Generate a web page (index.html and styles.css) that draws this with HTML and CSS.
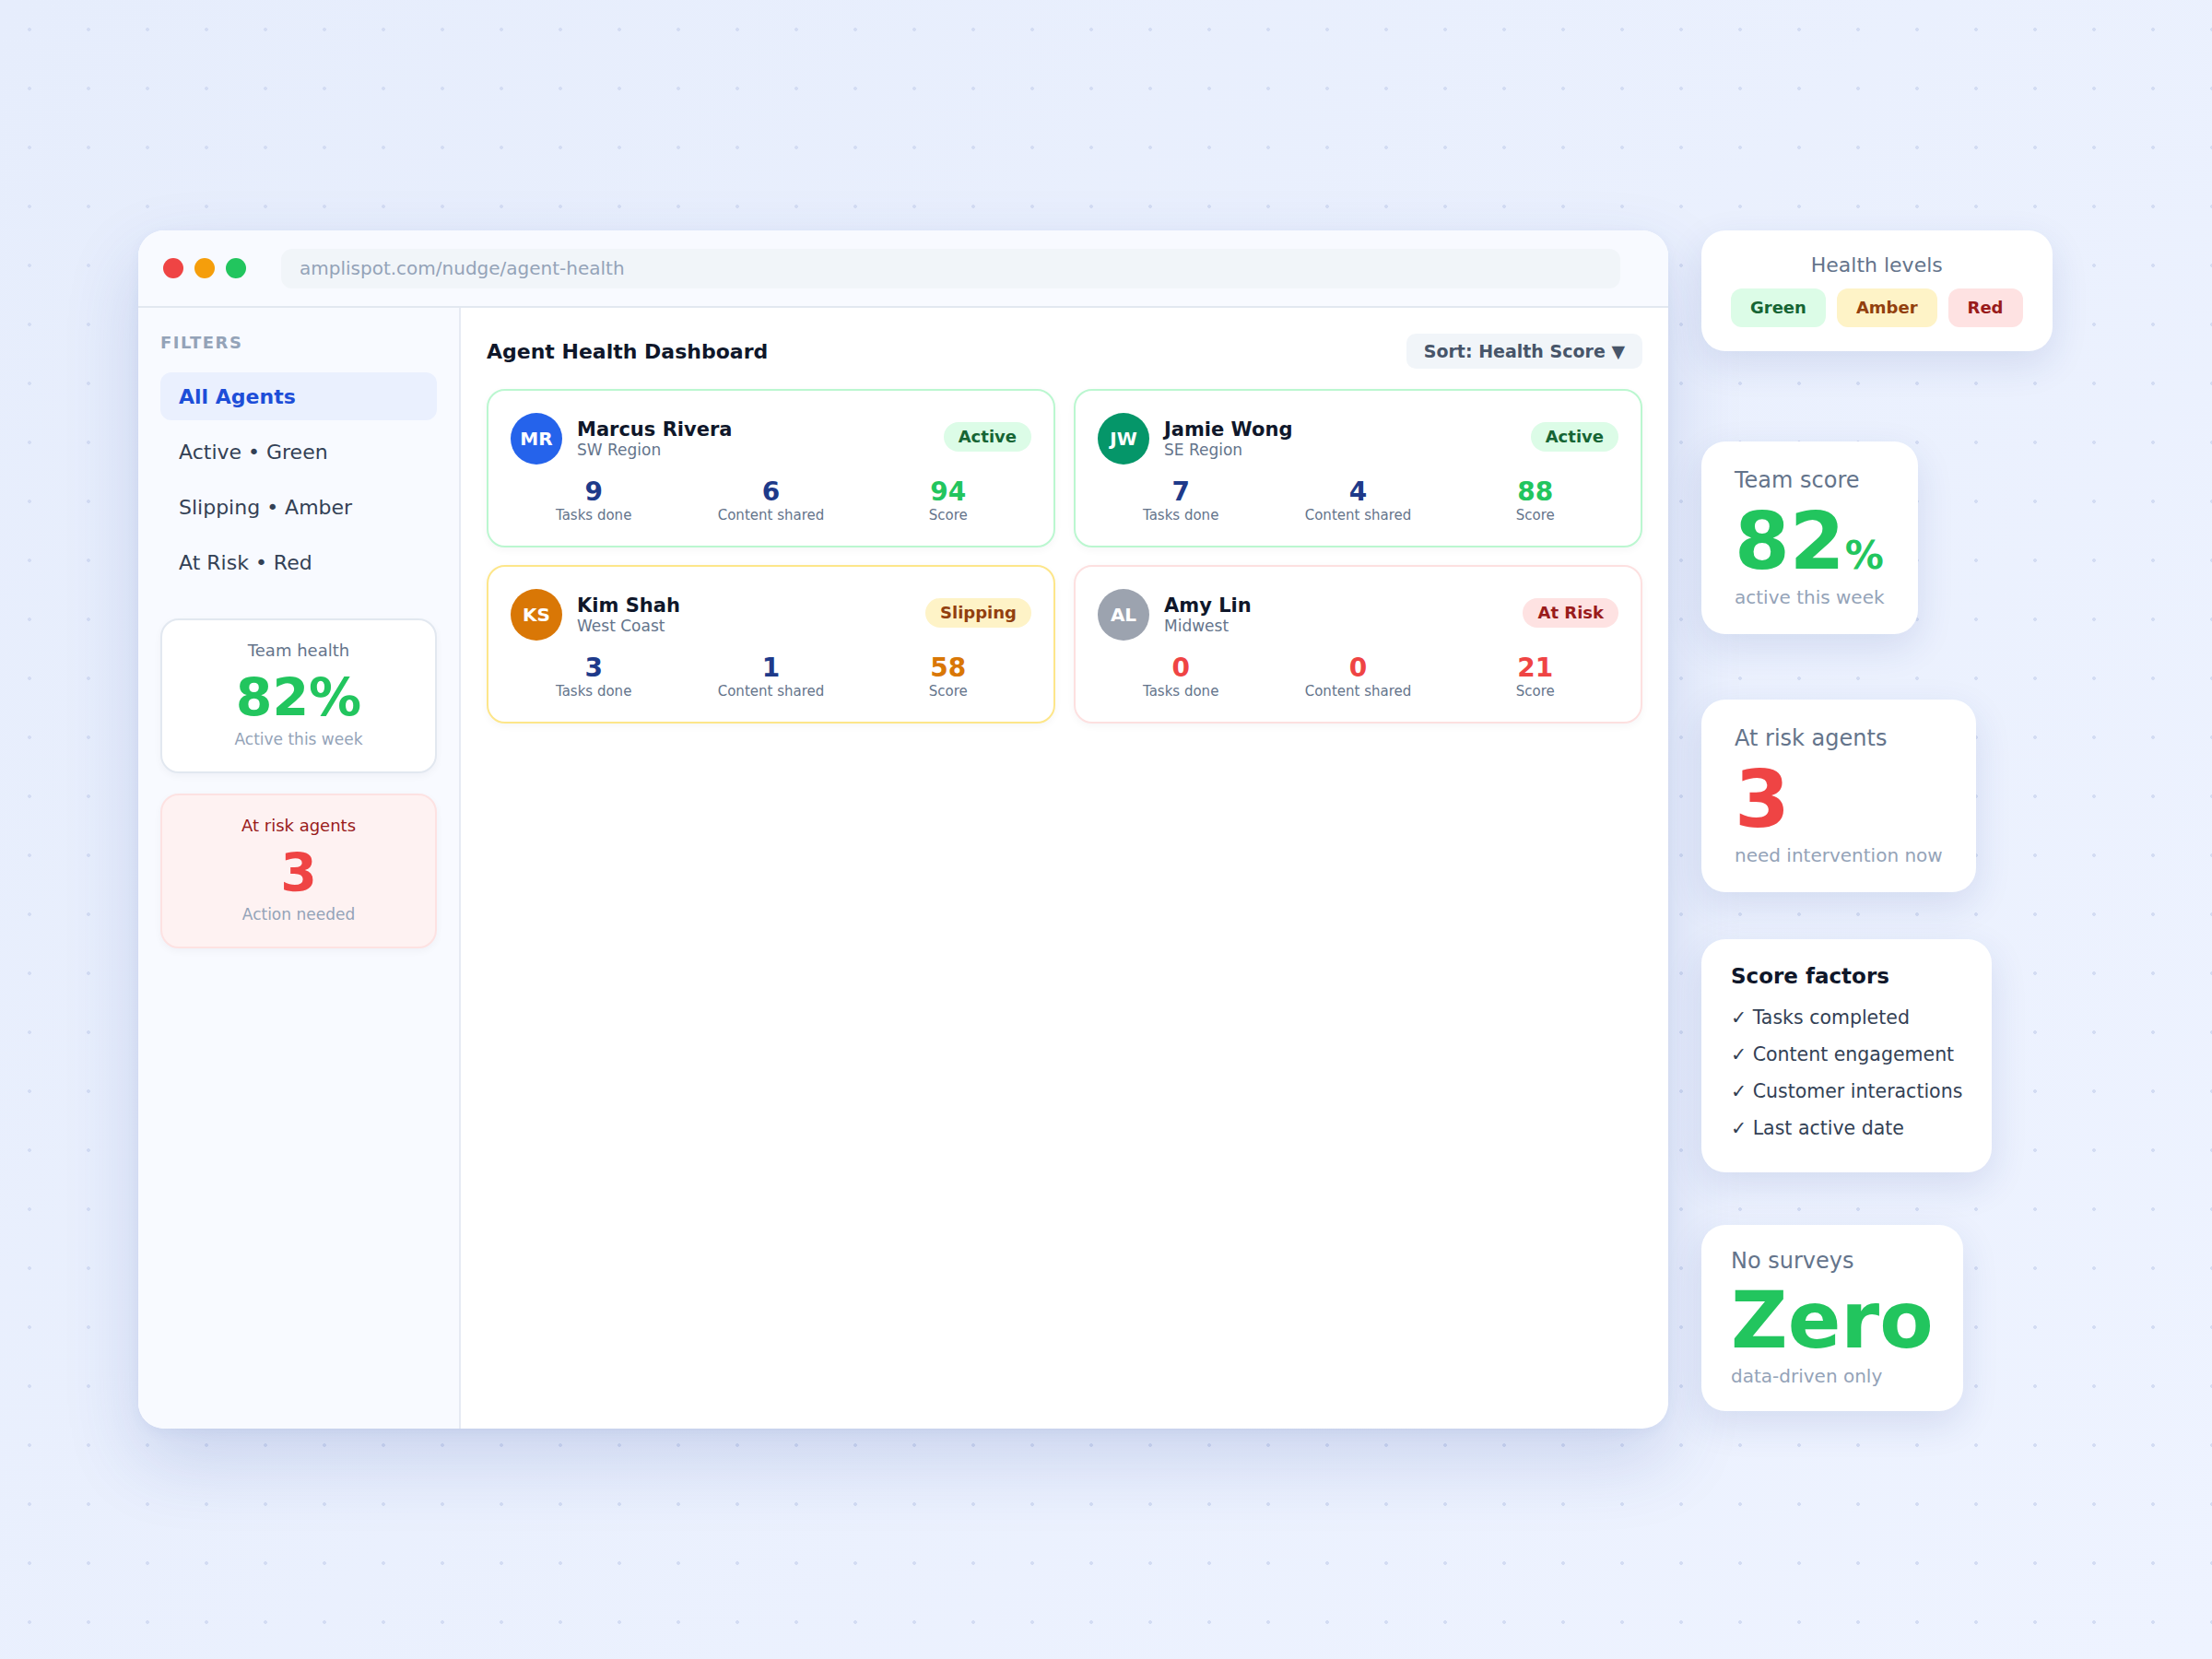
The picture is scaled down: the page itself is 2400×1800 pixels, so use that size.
FILE: index.html
```html
<!DOCTYPE html>
<html lang="en">
<head>
    <meta charset="UTF-8">
    <meta name="viewport" content="width=device-width, initial-scale=1.0">
    <title>Agent Health Dashboard</title>
    <link rel="stylesheet" href="styles.css">
</head>
<body>
    <div class="stage">
        <div class="window">
            <div class="titlebar">
                <div class="lights">
                    <span class="light red"></span>
                    <span class="light amber"></span>
                    <span class="light green"></span>
                </div>
                <div class="url">amplispot.com/nudge/agent-health</div>
            </div>

            <div class="app">
                <aside class="sidebar">
                    <div class="filters-label">Filters</div>
                    <ul class="filter-list">
                        <li class="filter active">All Agents</li>
                        <li class="filter">Active • Green</li>
                        <li class="filter">Slipping • Amber</li>
                        <li class="filter">At Risk • Red</li>
                    </ul>

                    <div class="mini-card">
                        <div class="mini-title">Team health</div>
                        <div class="mini-value">82%</div>
                        <div class="mini-sub">Active this week</div>
                    </div>
                    <div class="mini-card risk">
                        <div class="mini-title">At risk agents</div>
                        <div class="mini-value">3</div>
                        <div class="mini-sub">Action needed</div>
                    </div>
                </aside>

                <main class="content">
                    <div class="content-head">
                        <h1>Agent Health Dashboard</h1>
                        <div class="sort">Sort: Health Score ▼</div>
                    </div>

                    <div class="agent-grid">
                        <div class="agent-card green">
                            <div class="agent-head">
                                <div class="avatar blue">MR</div>
                                <div>
                                    <div class="agent-name">Marcus Rivera</div>
                                    <div class="agent-region">SW Region</div>
                                </div>
                                <span class="badge active">Active</span>
                            </div>
                            <div class="stats">
                                <div><div class="stat-num">9</div><div class="stat-label">Tasks done</div></div>
                                <div><div class="stat-num">6</div><div class="stat-label">Content shared</div></div>
                                <div><div class="stat-num good">94</div><div class="stat-label">Score</div></div>
                            </div>
                        </div>

                        <div class="agent-card green">
                            <div class="agent-head">
                                <div class="avatar teal">JW</div>
                                <div>
                                    <div class="agent-name">Jamie Wong</div>
                                    <div class="agent-region">SE Region</div>
                                </div>
                                <span class="badge active">Active</span>
                            </div>
                            <div class="stats">
                                <div><div class="stat-num">7</div><div class="stat-label">Tasks done</div></div>
                                <div><div class="stat-num">4</div><div class="stat-label">Content shared</div></div>
                                <div><div class="stat-num good">88</div><div class="stat-label">Score</div></div>
                            </div>
                        </div>

                        <div class="agent-card amber">
                            <div class="agent-head">
                                <div class="avatar orange">KS</div>
                                <div>
                                    <div class="agent-name">Kim Shah</div>
                                    <div class="agent-region">West Coast</div>
                                </div>
                                <span class="badge slipping">Slipping</span>
                            </div>
                            <div class="stats">
                                <div><div class="stat-num">3</div><div class="stat-label">Tasks done</div></div>
                                <div><div class="stat-num">1</div><div class="stat-label">Content shared</div></div>
                                <div><div class="stat-num warn">58</div><div class="stat-label">Score</div></div>
                            </div>
                        </div>

                        <div class="agent-card red">
                            <div class="agent-head">
                                <div class="avatar grey">AL</div>
                                <div>
                                    <div class="agent-name">Amy Lin</div>
                                    <div class="agent-region">Midwest</div>
                                </div>
                                <span class="badge risk">At Risk</span>
                            </div>
                            <div class="stats">
                                <div><div class="stat-num bad">0</div><div class="stat-label">Tasks done</div></div>
                                <div><div class="stat-num bad">0</div><div class="stat-label">Content shared</div></div>
                                <div><div class="stat-num bad">21</div><div class="stat-label">Score</div></div>
                            </div>
                        </div>
                    </div>
                </main>
            </div>
        </div>

        <div class="callouts">
            <div class="callout levels">
                <div class="levels-title">Health levels</div>
                <div class="pills">
                    <span class="pill green">Green</span>
                    <span class="pill amber">Amber</span>
                    <span class="pill red">Red</span>
                </div>
            </div>

            <div class="callout stat-callout team">
                <div class="callout-title">Team score</div>
                <div class="callout-big good">82<span class="pct">%</span></div>
                <div class="callout-sub">active this week</div>
            </div>

            <div class="callout stat-callout at-risk">
                <div class="callout-title">At risk agents</div>
                <div class="callout-big bad">3</div>
                <div class="callout-sub">need intervention now</div>
            </div>

            <div class="callout factors">
                <div class="factors-title">Score factors</div>
                <ul class="factor-list">
                    <li>✓ Tasks completed</li>
                    <li>✓ Content engagement</li>
                    <li>✓ Customer interactions</li>
                    <li>✓ Last active date</li>
                </ul>
            </div>

            <div class="callout surveys">
                <div class="callout-title">No surveys</div>
                <div class="callout-big zero good">Zero</div>
                <div class="callout-sub">data-driven only</div>
            </div>
        </div>
    </div>
</body>
</html>
```

FILE: styles.css
```css
/* Page */
body {
    margin: 0;
    min-height: 1800px;
    font-family: "DejaVu Sans", "Noto Sans", sans-serif;
    background-color: #ebf0fd;
    background-image:
        radial-gradient(circle at center, #d3dcf3 1.6px, transparent 2.2px),
        linear-gradient(135deg, #e6edfc 0%, #eef3ff 100%);
    background-size: 64px 64px, 100% 100%;
}

.stage {
    display: flex;
    align-items: flex-start;
    gap: 36px;
    padding: 250px 0 0 150px;
}

/* Browser window */
.window {
    width: 1660px;
    height: 1300px;
    display: flex;
    flex-direction: column;
    background: #fff;
    border-radius: 28px;
    overflow: hidden;
    box-shadow: 0 34px 80px rgba(40, 70, 160, 0.17), 0 4px 14px rgba(40, 70, 160, 0.05);
}

.titlebar {
    height: 82px;
    flex-shrink: 0;
    display: flex;
    align-items: center;
    padding: 0 52px 0 27px;
    background: #f8faff;
    border-bottom: 2px solid #e2e8f0;
}

.lights {
    display: flex;
    gap: 12px;
}

.light {
    width: 22px;
    height: 22px;
    border-radius: 50%;
}

.light.red { background: #ef4444; }
.light.amber { background: #f59e0b; }
.light.green { background: #22c55e; }

.url {
    flex: 1;
    height: 43px;
    margin-left: 38px;
    padding-left: 20px;
    display: flex;
    align-items: center;
    border-radius: 12px;
    background: #f1f5f9;
    color: #94a3b8;
    font-size: 20px;
}

.app {
    flex: 1;
    display: flex;
}

/* Sidebar */
.sidebar {
    width: 350px;
    box-sizing: border-box;
    padding: 27px 24px;
    background: #f8faff;
    border-right: 2px solid #e6eaf3;
}

.filters-label {
    font-size: 18px;
    line-height: 21px;
    font-weight: bold;
    letter-spacing: 1.5px;
    text-transform: uppercase;
    color: #94a3b8;
    margin-bottom: 22px;
}

.filter-list {
    list-style: none;
    margin: 0 0 35px;
    padding: 0;
    display: flex;
    flex-direction: column;
    gap: 8px;
}

.filter {
    height: 52px;
    display: flex;
    align-items: center;
    padding: 0 20px;
    border-radius: 12px;
    font-size: 22px;
    color: #334155;
}

.filter.active {
    background: #eaf0fe;
    color: #1d4ed8;
    font-weight: bold;
}

.mini-card {
    padding: 22px 16px 25px;
    margin-bottom: 22px;
    text-align: center;
    background: #fff;
    border: 2px solid #e2e8f0;
    border-radius: 20px;
    box-shadow: 0 3px 8px rgba(15, 23, 42, 0.04);
}

.mini-title {
    font-size: 18px;
    line-height: 22px;
    color: #64748b;
}

.mini-value {
    margin-top: 12px;
    font-size: 57px;
    line-height: 57px;
    font-weight: bold;
    color: #22c55e;
}

.mini-sub {
    margin-top: 6px;
    font-size: 17px;
    line-height: 20px;
    color: #94a3b8;
}

.mini-card.risk {
    background: #fef2f2;
    border-color: #fde2e2;
}

.mini-card.risk .mini-title { color: #991b1b; }
.mini-card.risk .mini-value { color: #ef4444; }

/* Main content */
.content {
    flex: 1;
    padding: 28px;
}

.content-head {
    display: flex;
    justify-content: space-between;
    align-items: center;
    margin-bottom: 22px;
}

.content-head h1 {
    margin: 0;
    font-size: 22px;
    color: #0f172a;
}

.sort {
    padding: 8px 19px;
    line-height: 22px;
    font-size: 19px;
    font-weight: bold;
    color: #475569;
    background: #f1f5f9;
    border-radius: 10px;
}

.agent-grid {
    display: grid;
    grid-template-columns: 1fr 1fr;
    gap: 19px 20px;
}

.agent-card {
    padding: 24px 24px 23px;
    background: #fff;
    border: 2px solid #e2e8f0;
    border-radius: 20px;
    box-shadow: 0 3px 8px rgba(15, 23, 42, 0.04);
}

.agent-card.green { border-color: #bbf7d0; }
.agent-card.amber { border-color: #fde68a; }
.agent-card.red { border-color: #fde0e0; }

.agent-head {
    display: flex;
    align-items: center;
}

.avatar {
    width: 56px;
    height: 56px;
    margin-right: 16px;
    border-radius: 50%;
    display: flex;
    align-items: center;
    justify-content: center;
    color: #fff;
    font-size: 20px;
    font-weight: bold;
}

.avatar.blue { background: #2563eb; }
.avatar.teal { background: #059669; }
.avatar.orange { background: #d97706; }
.avatar.grey { background: #9ca3af; }

.agent-name {
    font-size: 21px;
    line-height: 24px;
    font-weight: bold;
    color: #0f172a;
}

.agent-region {
    font-size: 17px;
    line-height: 20px;
    color: #64748b;
}

.badge {
    margin-left: auto;
    margin-bottom: 4px;
    padding: 5px 16px;
    line-height: 22px;
    font-size: 18px;
    font-weight: bold;
    border-radius: 999px;
}

.badge.active { background: #dcfce7; color: #166534; }
.badge.slipping { background: #fef3c7; color: #92400e; }
.badge.risk { background: #fee2e2; color: #991b1b; }

.stats {
    display: grid;
    grid-template-columns: repeat(3, 1fr);
    gap: 12px;
    margin-top: 13px;
    text-align: center;
}

.stat-num {
    font-size: 28px;
    line-height: 33px;
    font-weight: bold;
    color: #1e3a8a;
}

.stat-num.good { color: #22c55e; }
.stat-num.warn { color: #d97706; }
.stat-num.bad { color: #ef4444; }

.stat-label {
    font-size: 15px;
    line-height: 19px;
    color: #64748b;
}

/* Floating callouts */
.callouts {
    display: flex;
    flex-direction: column;
    align-items: flex-start;
}

.callout {
    background: #fff;
    border-radius: 26px;
    box-shadow: 0 14px 40px rgba(30, 58, 138, 0.12);
}

.levels {
    padding: 25px 32px 26px;
    text-align: center;
}

.levels-title {
    font-size: 22px;
    line-height: 26px;
    color: #64748b;
    margin-bottom: 12px;
}

.pills {
    display: flex;
    gap: 12px;
}

.pill {
    padding: 10px 21px;
    line-height: 22px;
    font-size: 18px;
    font-weight: bold;
    border-radius: 12px;
}

.pill.green { background: #dcfce7; color: #166534; }
.pill.amber { background: #fef3c7; color: #92400e; }
.pill.red { background: #fee2e2; color: #991b1b; }

.stat-callout {
    padding: 28px 36px;
}

.team { margin-top: 98px; }
.at-risk { margin-top: 71px; }

.callout-title {
    font-size: 24px;
    line-height: 28px;
    color: #64748b;
}

.callout-big {
    margin-top: 9px;
    font-size: 86px;
    line-height: 86px;
    font-weight: bold;
}

.callout-big.good { color: #22c55e; }
.callout-big.bad { color: #ef4444; }

.callout-big .pct {
    font-size: 42px;
    line-height: 1;
}

.callout-sub {
    margin-top: 6px;
    font-size: 20px;
    line-height: 24px;
    color: #94a3b8;
}

.factors {
    margin-top: 51px;
    padding: 26px 32px 33px;
}

.factors-title {
    font-size: 23px;
    line-height: 28px;
    font-weight: bold;
    color: #0f172a;
}

.factor-list {
    list-style: none;
    margin: 16px 0 0;
    padding: 0;
    display: flex;
    flex-direction: column;
    gap: 10px;
}

.factor-list li {
    font-size: 20.5px;
    line-height: 30px;
    color: #334155;
}

.surveys {
    margin-top: 57px;
    padding: 25px 32px 26px;
}

.callout-big.zero {
    margin-top: 8px;
    font-size: 85px;
    line-height: 85px;
}
```
